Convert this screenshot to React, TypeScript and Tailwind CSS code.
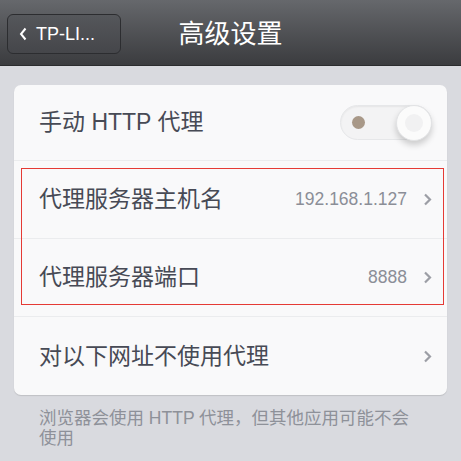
import React, { useState } from "react";

const font = { fontFamily: '"Liberation Sans", "Noto Sans CJK SC", sans-serif' };

function Chevron() {
  return (
    <svg width="9" height="13" viewBox="0 0 9 13" className="shrink-0">
      <path d="M2 1.5 L7 6.5 L2 11.5" fill="none" stroke="#9c9ea5" strokeWidth="2.2" />
    </svg>
  );
}

function Row({ label, value, border = true }: { label: string; value?: string; border?: boolean }) {
  return (
    <div
      className={`flex h-[78px] items-center pl-[25px] pr-[15px] ${border ? "border-b border-[#ebecee]" : ""}`}
    >
      <span className="flex-1 text-[23px] text-[#474a55]">{label}</span>
      {value && <span className="mr-[16px] text-[17.5px] text-[#8b8e97]">{value}</span>}
      <Chevron />
    </div>
  );
}

export default function App() {
  const [on, setOn] = useState(false);

  return (
    <div className="h-[461px] w-[461px] overflow-hidden bg-[#d9dadf]" style={font}>
      {/* title bar */}
      <div className="relative flex h-[66px] items-center justify-center border-b border-[#2b2c2e] bg-gradient-to-b from-[#66686c] to-[#3b3c3f]">
        <button className="absolute left-[7px] top-[14px] flex h-[40px] w-[114px] items-center gap-[9px] rounded-[6px] border border-[#2c2d30] bg-gradient-to-b from-[#55575b] to-[#45464a] pl-[11px] text-[18px] text-white">
          <svg width="8" height="14" viewBox="0 0 8 14">
            <path d="M6.5 1.5 L2 7 L6.5 12.5" fill="none" stroke="#fff" strokeWidth="2" />
          </svg>
          <span>TP-LI...</span>
        </button>
        <h1 className="mt-[3px] text-[26px] text-white">高级设置</h1>
      </div>

      {/* card */}
      <div className="mx-[14px] mt-[19px] overflow-hidden rounded-[7px] bg-[#f9f9fa] shadow-[0_1px_1px_rgba(0,0,0,0.12)]">
        <div className="flex h-[76px] items-center border-b border-[#ebecee] pl-[25px] pr-[15px]">
          <span className="flex-1 text-[23px] text-[#474a55]">手动 HTTP 代理</span>
          <button
            onClick={() => setOn(!on)}
            className="relative h-[35px] w-[92px] rounded-full border border-[#e6e7e9] bg-[#f3f3f4] shadow-[inset_0_1px_2px_rgba(0,0,0,0.06)]"
          >
            <span className="absolute left-[11px] top-[10px] h-[13px] w-[13px] rounded-full bg-[#a89888]" />
            <span className="absolute right-[-1px] top-[-1px] flex h-[36px] w-[36px] items-center justify-center rounded-full border border-[#e2e3e5] bg-[#fbfbfb] shadow-[0_4px_6px_rgba(0,0,0,0.18)]">
              <span className="h-[18px] w-[18px] rounded-full bg-[#f1f1f2]" />
            </span>
          </button>
        </div>
        <div className="relative">
          <Row label="代理服务器主机名" value="192.168.1.127" />
          <Row label="代理服务器端口" value="8888" />
          <div className="pointer-events-none absolute left-[7px] right-[3px] top-[7px] h-[137px] border border-[#e53a35]" />
        </div>
        <Row label="对以下网址不使用代理" border={false} />
      </div>

      <p className="mt-[13px] w-[420px] pl-[39px] text-[17.5px] leading-[20px] text-[#8e9199]">
        浏览器会使用 HTTP 代理，但其他应用可能不会使用
      </p>
    </div>
  );
}
